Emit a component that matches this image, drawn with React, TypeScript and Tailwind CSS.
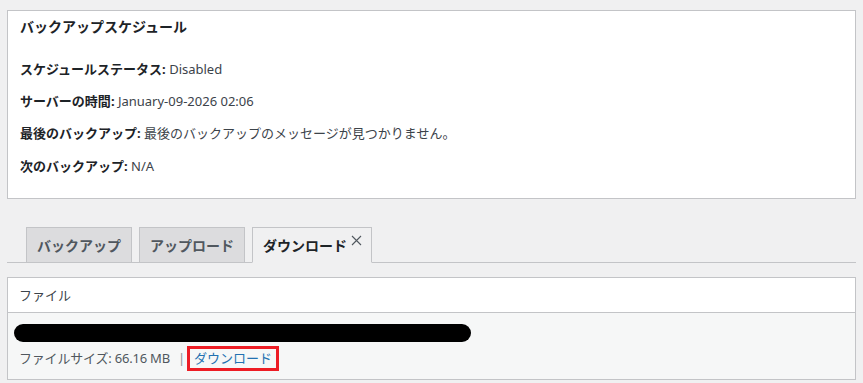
import React from 'react'

const font = "font-['Noto_Sans','Noto_Sans_CJK_JP',sans-serif]"

function Row({ k, v }: { k: string; v: string }) {
  return (
    <div className="text-[13px] leading-[20px] text-[#3c434a]">
      <span className="font-bold text-[#1d2327]">{k}:</span> {v}
    </div>
  )
}

function Tab({ label, active, closable }: { label: string; active?: boolean; closable?: boolean }) {
  return (
    <div
      className={
        active
          ? 'h-[36px] -mb-px flex items-center pl-[10px] pr-[9px] border border-[#c3c4c7] border-b-[#f0f0f1] bg-[#f0f0f1] text-[14px] font-bold text-[#1d2327]'
          : 'h-[36px] -mb-px flex items-center px-[10px] border border-[#c3c4c7] bg-[#dcdcde] text-[14px] font-bold text-[#50575e]'
      }
    >
      <span>{label}</span>
      {closable && (
        <svg className="ml-[4px] -mt-[10px]" width="11" height="11" viewBox="0 0 11 11">
          <path d="M1 1 L10 10 M10 1 L1 10" stroke="#50575e" strokeWidth="1.1" fill="none" />
        </svg>
      )}
    </div>
  )
}

export default function App() {
  return (
    <div className={`${font} min-h-screen w-full bg-[#f0f0f1] pt-[10px] px-[7px]`}>
      {/* schedule box */}
      <div className="border border-[#c3c4c7] bg-white pl-[12px] pt-[6px] pb-[22px]">
        <h2 className="text-[14px] leading-[20px] font-bold text-[#1d2327]">バックアップスケジュール</h2>
        <div className="mt-[22px] flex flex-col gap-[12px]">
          <Row k="スケジュールステータス" v="Disabled" />
          <Row k="サーバーの時間" v="January-09-2026 02:06" />
          <Row k="最後のバックアップ" v="最後のバックアップのメッセージが見つかりません。" />
          <div className="mt-px">
            <Row k="次のバックアップ" v="N/A" />
          </div>
        </div>
      </div>

      {/* tabs */}
      <div className="mt-[28px] flex items-end gap-[7px] pl-[19px] border-b border-[#c3c4c7]">
        <Tab label="バックアップ" />
        <Tab label="アップロード" />
        <Tab label="ダウンロード" active closable />
      </div>

      {/* files table */}
      <div className="mt-[14px] border border-[#c3c4c7] bg-white">
        <div className="h-[35px] flex items-center pl-[11px] pt-[2px] text-[13px] text-[#3c434a] border-b border-[#c3c4c7]">
          ファイル
        </div>
        <div className="bg-[#f6f7f7] pt-[11px] pb-[8px]">
          <div className="ml-[6px] w-[457px] h-[18px] rounded-full bg-black" />
          <div className="mt-[4px] pl-[11px] flex items-center text-[13px] text-[#50575e]">
            <span className="tracking-[-0.2px]">ファイルサイズ: 66.16 MB</span>
            <span className="ml-[8px] text-[#8c8f94]">|</span>
            <a className="ml-[2px] h-[25px] flex items-center border-[3px] border-[#ed1c24] px-[4px] text-[#2271b1]">
              ダウンロード
            </a>
          </div>
        </div>
      </div>
    </div>
  )
}
